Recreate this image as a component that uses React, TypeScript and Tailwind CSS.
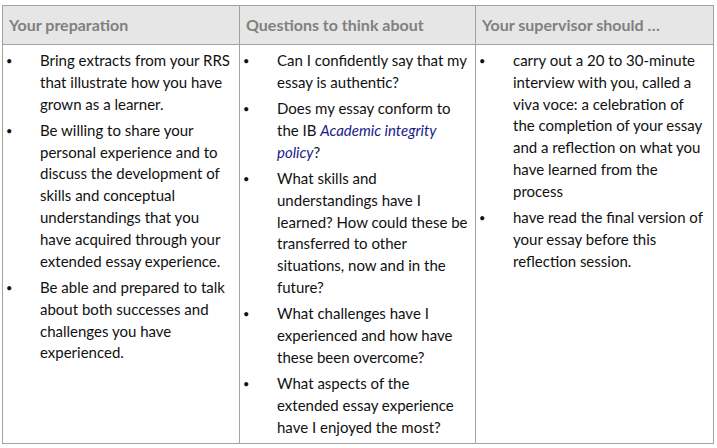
import React from "react";

const col1 = [
  "Bring extracts from your RRS that illustrate how you have grown as a learner.",
  "Be willing to share your personal experience and to discuss the development of skills and conceptual understandings that you have acquired through your extended essay experience.",
  "Be able and prepared to talk about both successes and challenges you have experienced.",
];

function Item({ children }: { children: React.ReactNode }) {
  return (
    <li className="flex mb-[4.5px]">
      <span className="w-[37px] shrink-0 pl-[3px] text-[11px]">•</span>
      <span className="flex-1">{children}</span>
    </li>
  );
}

export default function App() {
  return (
    <div
      className="w-[717px] h-[448px] bg-white pt-[5px] pl-[2px]"
      style={{ fontFamily: 'Lato, "Noto Sans", sans-serif' }}
    >
      <div className="w-[712px] h-[439px] overflow-hidden border border-[#a3a3a3] grid grid-cols-[237px_236px_1fr] grid-rows-[39px_minmax(0,1fr)] text-[15px] leading-[21.8px] text-[#111]">
        <div className="bg-[#e6e6e6] border-b border-r border-[#a3a3a3] pl-[6px] flex items-center font-bold text-[16px] text-[#808080]">Your preparation</div>
        <div className="bg-[#e6e6e6] border-b border-r border-[#a3a3a3] pl-[6px] flex items-center font-bold text-[16px] text-[#808080]">Questions to think about</div>
        <div className="bg-[#e6e6e6] border-b border-[#a3a3a3] pl-[6px] flex items-center font-bold text-[16px] text-[#808080]">Your supervisor should …</div>
        <ul className="border-r border-[#a3a3a3] pt-[5px] pr-[6px]">
          {col1.map((t, i) => (
            <Item key={i}>{t}</Item>
          ))}
        </ul>
        <ul className="border-r border-[#a3a3a3] pt-[5px] pr-[6px]">
          <Item>Can I confidently say that my essay is authentic?</Item>
          <Item>
            Does my essay conform to the IB <i className="text-[#1a1a8c]">Academic integrity policy</i>?
          </Item>
          <Item>What skills and understandings have I learned? How could these be transferred to other situations, now and in the future?</Item>
          <Item>What challenges have I experienced and how have these been overcome?</Item>
          <Item>What aspects of the extended essay experience have I enjoyed the most?</Item>
        </ul>
        <ul className="pt-[5px] pr-[6px]">
          <Item>carry out a 20 to 30-minute interview with you, called a viva voce: a celebration of the completion of your essay and a reflection on what you have learned from the process</Item>
          <Item>have read the final version of your essay before this reflection session.</Item>
        </ul>
      </div>
    </div>
  );
}
